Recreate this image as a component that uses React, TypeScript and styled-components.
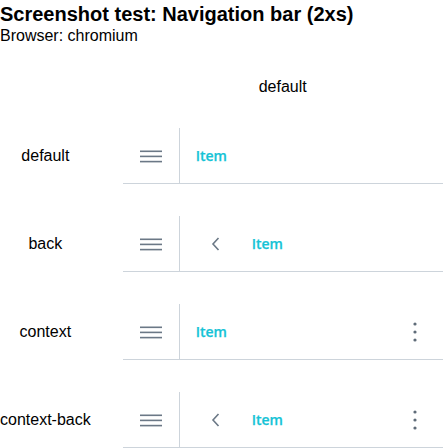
import React from 'react';
import styled, { createGlobalStyle } from 'styled-components';

const Global = createGlobalStyle`
  html, body { margin: 0; padding: 0; overflow: hidden; background: #fff; }
  body { font-family: "Liberation Sans", Arial, sans-serif; color: #000; }
`;

const Header = styled.header`padding-top:2px;height:62px;box-sizing:border-box`;
const Title = styled.h1`margin:0;font-size:20px;font-weight:700;line-height:24px`;
const Sub = styled.div`font-size:16px;line-height:20px`;
const Table = styled.table`border-collapse:collapse`;
const Th = styled.th`font-weight:400;font-size:16px;padding:16px;text-align:center`;
const Label = styled.td`font-size:16px;text-align:center;padding:16px 16px 16px 0;white-space:nowrap`;
const Cell = styled.td`padding:16px`;

const Bar = styled.nav`display:flex;align-items:stretch;width:320px;height:56px;box-sizing:border-box;background:#fff;border-bottom:1px solid #cdd4db`;
const Burger = styled.button`width:57px;flex:none;border:0;border-right:1px solid #cdd4db;background:none;padding:0;display:flex;align-items:center;justify-content:center`;
const Main = styled.div`flex:1;display:flex;align-items:center;padding-left:16px`;
const Back = styled.button`width:40px;height:40px;border:0;background:none;padding:0;display:flex;align-items:center;justify-content:center`;
const Item = styled.span<{ back?: boolean }>`font-family:"Open Sans",sans-serif;font-weight:600;font-size:14px;color:#16c3d6;-webkit-text-stroke:0.25px #16c3d6;margin-left:${({ back }) => (back ? '16px' : '0')}`;
const Kebab = styled.button`width:56px;flex:none;border:0;background:none;padding:0;display:flex;align-items:center;justify-content:center`;

const Hamburger = () => (
  <svg width="22" height="14" viewBox="0 0 22 14">
    <g fill="#6b7886">
      <rect x="0" y="1.5" width="22" height="1.6" />
      <rect x="0" y="6.6" width="22" height="1.6" />
      <rect x="0" y="11.8" width="22" height="1.6" />
    </g>
  </svg>
);

const Chevron = () => (
  <svg width="10" height="14" viewBox="0 0 10 14">
    <path d="M7.5 1 L2 7 L7.5 13" fill="none" stroke="#6b7886" strokeWidth="1.6" />
  </svg>
);

const Dots = () => (
  <svg width="4" height="20" viewBox="0 0 4 20">
    <g fill="#5f6b78">
      <circle cx="2" cy="2" r="1.6" />
      <circle cx="2" cy="10" r="1.6" />
      <circle cx="2" cy="18" r="1.6" />
    </g>
  </svg>
);

function NavBar({ back, context }: { back?: boolean; context?: boolean }) {
  return (
    <Bar>
      <Burger><Hamburger /></Burger>
      <Main>
        {back && <Back><Chevron /></Back>}
        <Item back={back}>Item</Item>
      </Main>
      {context && <Kebab><Dots /></Kebab>}
    </Bar>
  );
}

const rows = [
  { name: 'default' },
  { name: 'back', back: true },
  { name: 'context', context: true },
  { name: 'context-back', back: true, context: true },
];

export default function App() {
  return (
    <>
      <Global />
      <Header>
        <Title>Screenshot test: Navigation bar (2xs)</Title>
        <Sub>Browser: chromium</Sub>
      </Header>
      <Table>
        <thead>
          <tr><th /><Th>default</Th></tr>
        </thead>
        <tbody>
          {rows.map(r => (
            <tr key={r.name}>
              <Label>{r.name}</Label>
              <Cell><NavBar back={r.back} context={r.context} /></Cell>
            </tr>
          ))}
        </tbody>
      </Table>
    </>
  );
}
